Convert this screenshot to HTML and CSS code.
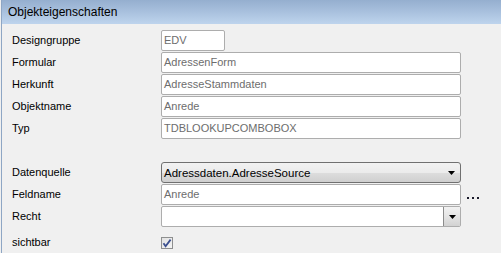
FILE: index.html
```html
<!DOCTYPE html>
<html lang="de">
<head>
<meta charset="utf-8">
<title>Objekteigenschaften</title>
<link rel="stylesheet" href="styles.css">
</head>
<body>
<div class="panel">
  <div class="header">Objekteigenschaften</div>
  <div class="content">
    <div class="form">
      <div class="label">Designgruppe</div>
      <div class="field"><div class="input short">EDV</div></div>
      <div></div>

      <div class="label">Formular</div>
      <div class="field"><div class="input">AdressenForm</div></div>
      <div></div>

      <div class="label">Herkunft</div>
      <div class="field"><div class="input">AdresseStammdaten</div></div>
      <div></div>

      <div class="label">Objektname</div>
      <div class="field"><div class="input">Anrede</div></div>
      <div></div>

      <div class="label">Typ</div>
      <div class="field"><div class="input">TDBLOOKUPCOMBOBOX</div></div>
      <div></div>

      <div class="spacer"></div>

      <div class="label">Datenquelle</div>
      <div class="field">
        <div class="combo">
          <span class="combo-text">Adressdaten.AdresseSource</span>
          <svg class="arrow" width="7" height="4" viewBox="0 0 7 4"><path d="M0 0H7L3.5 4Z" fill="#000"/></svg>
        </div>
      </div>
      <div></div>

      <div class="label">Feldname</div>
      <div class="field"><div class="input">Anrede</div></div>
      <div class="more">
        <svg width="12" height="2" viewBox="0 0 12 2"><rect x="0" y="0" width="2" height="2" fill="#1b1b2b"/><rect x="5" y="0" width="2" height="2" fill="#1b1b2b"/><rect x="10" y="0" width="2" height="2" fill="#1b1b2b"/></svg>
      </div>

      <div class="label">Recht</div>
      <div class="field">
        <div class="input dropdown">
          <span class="dd-text"></span>
          <span class="dd-btn"><svg width="7" height="4" viewBox="0 0 7 4"><path d="M0 0H7L3.5 4Z" fill="#000"/></svg></span>
        </div>
      </div>
      <div></div>

      <div class="label check-label">sichtbar</div>
      <div class="field check-field">
        <span class="checkbox">
          <svg width="12" height="12" viewBox="0 0 12 12"><path d="M2.5 6.2L4.6 9.2L9.6 2.6" fill="none" stroke="#3b4f8f" stroke-width="1.8"/></svg>
        </span>
      </div>
      <div></div>
    </div>
  </div>
</div>
</body>
</html>
```

FILE: styles.css
```css
html, body {
  margin: 0;
  padding: 0;
  background: #f0f0f0;
}

body {
  font-family: "Liberation Sans", Arial, sans-serif;
  font-size: 11px;
  color: #000;
  width: 501px;
  height: 253px;
  overflow: hidden;
}

.panel {
  margin-left: 1px;
  border-left: 1px solid #8ea6c4;
  height: 253px;
  box-sizing: border-box;
}

.header {
  height: 24px;
  line-height: 24px;
  padding-left: 6px;
  font-size: 12px;
  color: #000;
  background: linear-gradient(to bottom, #95afcf 0%, #a9c1de 50%, #bed4ed 100%);
}

.content {
  padding: 6px 0 0 10px;
}

.form {
  display: grid;
  grid-template-columns: 149px 300px 30px;
  grid-auto-rows: 21px;
  row-gap: 1px;
  align-items: center;
}

.label {
  line-height: 21px;
  white-space: nowrap;
}

.field {
  height: 21px;
  display: flex;
}

.input {
  box-sizing: border-box;
  width: 300px;
  height: 21px;
  border: 1px solid #adadad;
  border-radius: 2px;
  background: #fff;
  color: #6d6d6d;
  line-height: 19px;
  padding-left: 2px;
  white-space: nowrap;
  overflow: hidden;
}

.input.short {
  width: 64px;
}

.spacer {
  grid-column: 1 / 4;
}

.combo {
  box-sizing: border-box;
  width: 300px;
  height: 21px;
  border: 1px solid #707070;
  border-radius: 3px;
  background: linear-gradient(to bottom, #f2f2f2 0%, #ebebeb 50%, #dddddd 51%, #cfcfcf 100%);
  display: flex;
  align-items: center;
  justify-content: space-between;
  padding: 0 5px 0 2px;
}

.combo-text {
  color: #000;
  font-size: 11.5px;
}

.dropdown {
  display: flex;
  padding: 0;
}

.dd-text {
  flex: 1;
}

.dd-btn {
  width: 16px;
  border-left: 1px solid #8c8c8c;
  background: linear-gradient(to bottom, #f2f2f2 0%, #e4e4e4 50%, #d2d2d2 100%);
  display: flex;
  align-items: center;
  justify-content: center;
}

.more {
  display: flex;
  align-items: flex-end;
  height: 21px;
  padding-left: 6px;
  padding-bottom: 6px;
  box-sizing: border-box;
}

.more svg {
  display: block;
}

.check-label,
.check-field {
  margin-top: 8px;
}

.check-field {
  align-items: center;
}

.checkbox {
  box-sizing: border-box;
  width: 12px;
  height: 12px;
  border: 1px solid #8e8f8f;
  background: linear-gradient(to bottom right, #e2e2e2, #f4f4f4);
  position: relative;
}

.checkbox svg {
  position: absolute;
  left: -1px;
  top: -1px;
}
```
